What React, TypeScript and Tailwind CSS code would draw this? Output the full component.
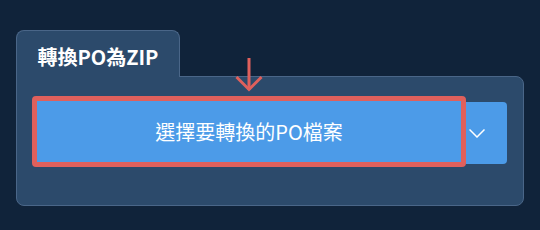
export default function App() {
  return (
    <div
      className="w-[540px] h-[230px] bg-[#10233a] pt-[30px] pl-4"
      style={{ fontFamily: '"Noto Sans CJK TC", "Noto Sans", sans-serif' }}
    >
      <div className="w-[508px]">
        {/* Tab */}
        <div className="relative z-10 -mb-px w-[164px] h-[47px] pt-[5px] rounded-t-lg border border-b-0 border-[#4a6688] bg-[#2c4a6b] flex items-center justify-center text-white font-bold text-[20px]">
          轉換PO為ZIP
        </div>

        {/* Panel */}
        <div className="h-[130px] rounded-lg rounded-tl-none border border-[#4a6688] bg-[#2c4a6b] pl-[15px] pr-4 pt-[19px]">
          <div className="relative flex items-start">
            <svg
              className="absolute left-[203px] -top-[38px] z-20"
              width="28"
              height="34"
              viewBox="0 0 28 34"
              fill="none"
              stroke="#e0605c"
              strokeWidth="3"
            >
              <line x1="14" y1="0" x2="14" y2="32" />
              <polyline points="1.5,19 14,31.5 26.5,19" />
            </svg>
            <button className="w-[434px] h-[71px] border-[5px] border-[#e0605c] rounded-[4px] bg-[#4c9be8] text-white text-[20px] flex items-center justify-center">
              選擇要轉換的PO檔案
            </button>
            <button className="mt-[6px] w-[41px] h-[62px] rounded-r-[4px] bg-[#4c9be8] flex items-center pl-[3px]">
              <svg width="16" height="9" viewBox="0 0 16 9" fill="none" stroke="white" strokeWidth="1.5">
                <polyline points="0.5,0.5 8,8 15.5,0.5" />
              </svg>
            </button>
          </div>
        </div>
      </div>
    </div>
  )
}
